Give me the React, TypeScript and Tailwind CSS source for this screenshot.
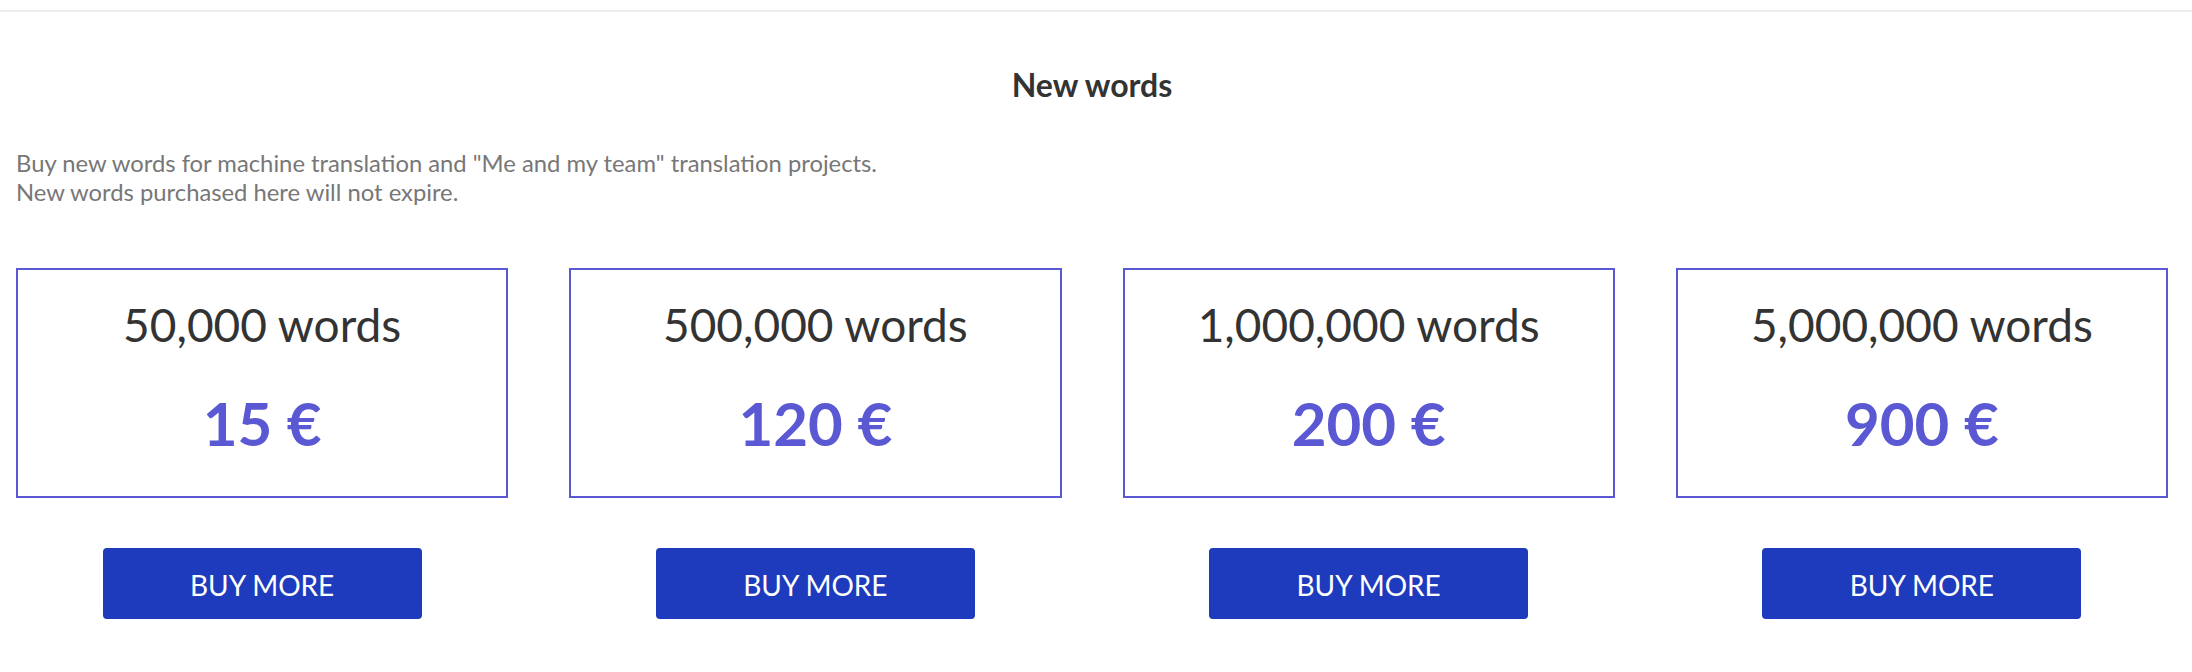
import React from 'react'

const packages = [
  { words: '50,000 words', price: '15 €' },
  { words: '500,000 words', price: '120 €' },
  { words: '1,000,000 words', price: '200 €' },
  { words: '5,000,000 words', price: '900 €' }
]

const App = () => {
  return (
    <div className="w-full h-[672px] bg-white font-['Lato','Noto_Sans',sans-serif]">
      <div className="h-[10px]" />
      <div className="h-[2px] bg-[#ececec]" />
      <div className="pl-4 pr-6">
        <h1 className="mt-[55px] text-center text-[32px] leading-[36px] font-bold text-[#333]">
          New words
        </h1>
        <p className="mt-[46px] text-[23.8px] leading-[29px] text-[#777]">
          Buy new words for machine translation and "Me and my team" translation projects.
          <br />
          New words purchased here will not expire.
        </p>
        <div className="mt-[61px] grid grid-cols-4 gap-x-[61px]">
          {packages.map((p) => (
            <div key={p.words} className="flex flex-col items-center">
              <div className="w-full h-[230px] border-2 border-[#5a58d2] flex flex-col items-center pt-[28px]">
                <div className="text-[46px] leading-[54px] text-[#333]">{p.words}</div>
                <div className="mt-[36px] text-[60px] leading-[70px] font-bold text-[#5a58d2]">
                  {p.price}
                </div>
              </div>
              <button className="mt-[50px] w-[319px] h-[71px] pt-[2px] rounded bg-[#1d3bbc] text-white text-[28px] uppercase">
                Buy more
              </button>
            </div>
          ))}
        </div>
      </div>
    </div>
  )
}

export default App
